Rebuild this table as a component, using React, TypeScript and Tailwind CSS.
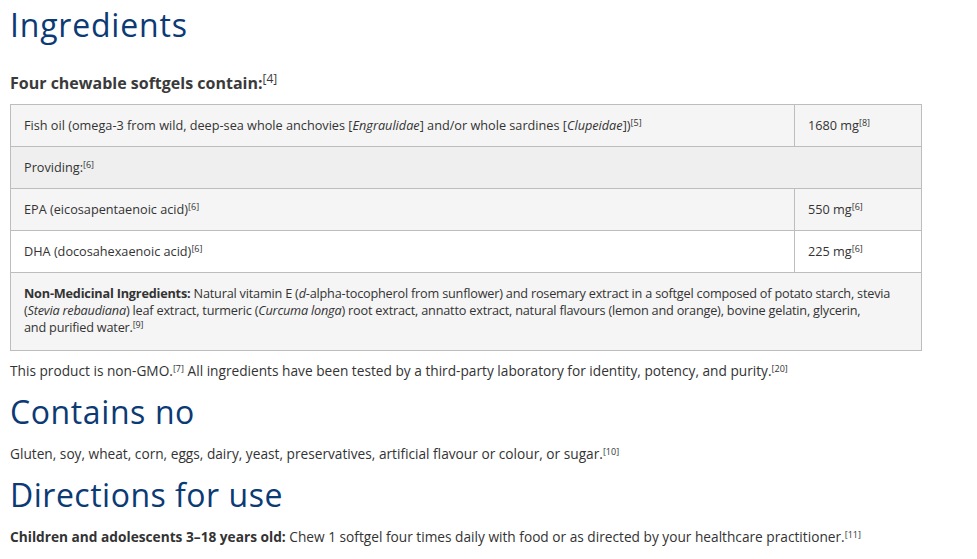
import React from "react";

const Ref = ({ n }: { n: string }) => <sup className="text-[9px]">[{n}]</sup>;

const cell = "border border-[#bdbdbd] px-[13px] py-[12px] align-top leading-[17px]";

export default function App() {
  return (
    <div className="min-h-[559px] bg-white px-[10px] text-[#333] [font-family:'Open_Sans',sans-serif]">
      <h1 className="pt-[6px] text-[32px] leading-[38px] tracking-[0.8px] text-[#0b3a75]">Ingredients</h1>

      <p className="mt-[29px] text-[16px] font-bold leading-[20px] text-[#3a3a3a]">
        Four chewable softgels contain:<sup className="text-[12px] font-normal">[4]</sup>
      </p>

      <table className="mt-[11px] w-[912px] border-collapse text-[12.7px]">
        <tbody>
          <tr className="bg-[#f5f5f5]">
            <td className={cell}>
              Fish oil (omega-3 from wild, deep-sea whole anchovies [<i>Engraulidae</i>] and/or whole
              sardines [<i>Clupeidae</i>])<Ref n="5" />
            </td>
            <td className={`${cell} w-[127px]`}>
              1680 mg<Ref n="8" />
            </td>
          </tr>
          <tr className="bg-[#efefef]">
            <td className={cell} colSpan={2}>
              Providing:<Ref n="6" />
            </td>
          </tr>
          <tr className="bg-[#f5f5f5]">
            <td className={cell}>
              EPA (eicosapentaenoic acid)<Ref n="6" />
            </td>
            <td className={cell}>
              550 mg<Ref n="6" />
            </td>
          </tr>
          <tr className="bg-white">
            <td className={cell}>
              DHA (docosahexaenoic acid)<Ref n="6" />
            </td>
            <td className={cell}>
              225 mg<Ref n="6" />
            </td>
          </tr>
          <tr className="bg-[#f5f5f5]">
            <td className={`${cell} pb-[14px] tracking-[-0.2px]`} colSpan={2}>
              <b>Non-Medicinal Ingredients:</b> Natural vitamin E (<i>d</i>-alpha-tocopherol from
              sunflower) and rosemary extract in a softgel composed of potato starch, stevia
              <br />(<i>Stevia rebaudiana</i>) leaf extract, turmeric (<i>Curcuma longa</i>) root extract,
              annatto extract, natural flavours (lemon and orange), bovine gelatin, glycerin,
              <br />and purified water.<Ref n="9" />
            </td>
          </tr>
        </tbody>
      </table>

      <p className="mt-[10px] text-[13.7px] leading-[20px]">
        This product is non-GMO.<Ref n="7" /> All ingredients have been tested by a third-party
        laboratory for identity, potency, and purity.<Ref n="20" />
      </p>

      <h2 className="mt-[12px] text-[32px] leading-[38px] tracking-[0.6px] text-[#0b3a75]">Contains no</h2>

      <p className="mt-[13px] text-[13.7px] leading-[20px]">
        Gluten, soy, wheat, corn, eggs, dairy, yeast, preservatives, artificial flavour or colour,
        or sugar.<Ref n="10" />
      </p>

      <h2 className="mt-[12px] text-[32px] leading-[38px] tracking-[0.5px] text-[#0b3a75]">Directions for use</h2>

      <p className="mt-[13px] text-[13.7px] leading-[20px]">
        <b>Children and adolescents 3–18 years old:</b> Chew 1 softgel four times daily with food or
        as directed by your healthcare practitioner.<Ref n="11" />
      </p>
    </div>
  );
}
